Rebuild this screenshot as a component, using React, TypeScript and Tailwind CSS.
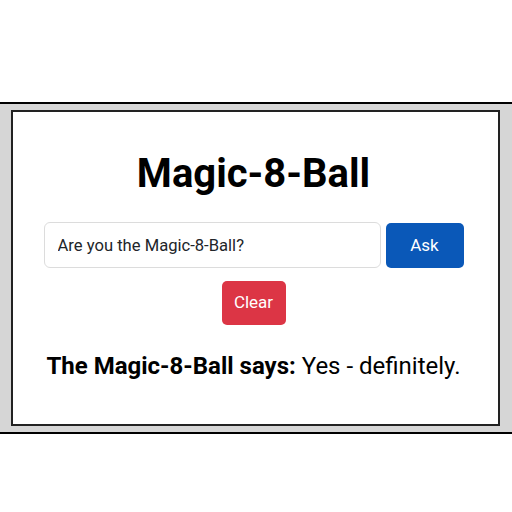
import { useState } from "react";

export default function App() {
  const [question, setQuestion] = useState("Are you the Magic-8-Ball?");
  const [answer, setAnswer] = useState("Yes - definitely.");

  return (
    <div className="min-h-[512px] bg-white pt-[102px] font-['Roboto',sans-serif] text-black">
      <div className="border-y-2 border-black bg-[#d6d6d6] py-[6px] pl-[11px] pr-[12px]">
        <div className="flex h-[316px] flex-col items-center border-2 border-[#222] bg-white pr-[4px] pt-[38px]">
          <h1 className="text-[40px] font-bold leading-[48px]">Magic-8-Ball</h1>
          <div className="mt-[24px] flex gap-[5px]">
            <input
              className="h-[46px] w-[337px] rounded-[6px] border border-[#dcdcdc] px-[13px] text-[16.6px] text-[#212529] outline-none"
              value={question}
              onChange={(e) => setQuestion(e.target.value)}
            />
            <button className="mt-px h-[45px] w-[78px] rounded-[5px] bg-[#0a58b8] text-[17px] text-white">
              Ask
            </button>
          </div>
          <button
            className="mt-[13px] h-[44px] w-[64px] rounded-[5px] bg-[#dc3545] text-[17px] text-white"
            onClick={() => {
              setQuestion("");
              setAnswer("");
            }}
          >
            Clear
          </button>
          <p className="mt-[26px] text-[24px] leading-[30px]">
            <span className="font-bold">The Magic-8-Ball says:</span> {answer}
          </p>
        </div>
      </div>
    </div>
  );
}
